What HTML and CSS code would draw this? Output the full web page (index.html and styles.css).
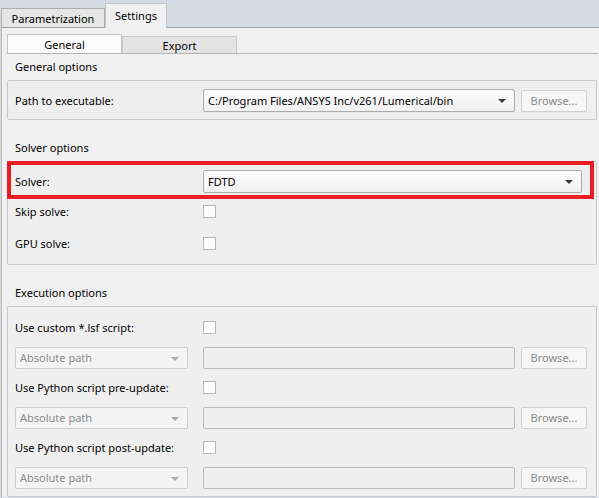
FILE: index.html
```html
<!DOCTYPE html>
<html>
<head>
  <title>Settings</title>
  <link rel="stylesheet" href="styles.css">
</head>
<body>
  <div class="window">

    <!-- top tabs -->
    <div class="tabbar">
      <div class="tab">Parametrization</div>
      <div class="tab active">Settings</div>
    </div>

    <div class="pane">
      <div class="subtabs">
        <div class="subtab active">General</div>
        <div class="subtab">Export</div>
      </div>

      <div class="section-title">General options</div>
      <div class="group">
        <div class="row">
          <span class="label">Path to executable:</span>
          <div class="combo">C:/Program Files/ANSYS Inc/v261/Lumerical/bin<span class="arrow"></span></div>
          <button class="browse">Browse...</button>
        </div>
      </div>

      <div class="section-title spaced">Solver options</div>
      <div class="group">
        <div class="highlight"></div>
        <div class="row">
          <span class="label">Solver:</span>
          <div class="combo solver">FDTD<span class="arrow"></span></div>
        </div>
        <div class="row check-row">
          <span class="label">Skip solve:</span>
          <span class="checkbox"></span>
        </div>
        <div class="row check-row">
          <span class="label">GPU solve:</span>
          <span class="checkbox"></span>
        </div>
      </div>

      <div class="section-title spaced">Execution options</div>
      <div class="group exec">
        <div class="row check-row">
          <span class="label">Use custom *.lsf script:</span>
          <span class="checkbox"></span>
        </div>
        <div class="row">
          <div class="combo disabled">Absolute path<span class="arrow"></span></div>
          <div class="field"></div>
          <button class="browse">Browse...</button>
        </div>
        <div class="row check-row">
          <span class="label">Use Python script pre-update:</span>
          <span class="checkbox"></span>
        </div>
        <div class="row">
          <div class="combo disabled">Absolute path<span class="arrow"></span></div>
          <div class="field"></div>
          <button class="browse">Browse...</button>
        </div>
        <div class="row check-row">
          <span class="label">Use Python script post-update:</span>
          <span class="checkbox"></span>
        </div>
        <div class="row">
          <div class="combo disabled">Absolute path<span class="arrow"></span></div>
          <div class="field"></div>
          <button class="browse">Browse...</button>
        </div>
      </div>
    </div>
  </div>
</body>
</html>
```

FILE: styles.css
```css
body {
  margin: 0;
  font-family: "Noto Sans", "Open Sans", sans-serif;
  font-size: 11px;
  color: #000;
  background: #f0f0f0;
  overflow: hidden;
}

.window {
  width: 599px;
  height: 498px;
  background: #d4dbe3;
  padding-left: 1px;
  box-sizing: border-box;
}

.tabbar {
  height: 27px;
  display: flex;
  align-items: flex-end;
}

.tab {
  box-sizing: border-box;
  height: 19px;
  width: 104px;
  border: 1px solid #adadad;
  border-bottom: none;
  background: #e6e6e6;
  display: flex;
  align-items: center;
  justify-content: center;
}

.tab.active {
  height: 25px;
  width: 62px;
  background: #f0f0f0;
  border-color: #c4c4c4;
  position: relative;
  top: 1px;
  z-index: 1;
  padding-bottom: 2px;
}

.pane {
  background: #f0f0f0;
  border-top: 1px solid #a3a3a3;
  border-left: 1px solid #b8b8b8;
  padding: 5px 0 0 5px;
  height: 470px;
  box-sizing: border-box;
}

.subtabs {
  display: flex;
  align-items: flex-end;
  height: 20px;
  border-bottom: 1px solid #b4b4b4;
  margin-right: 1px;
}

.subtab {
  box-sizing: border-box;
  width: 115px;
  height: 17px;
  border: 1px solid #c8c8c8;
  border-bottom: none;
  background: #e3e3e3;
  display: flex;
  align-items: center;
  justify-content: center;
}

.subtab.active {
  height: 19px;
  background: #fbfbfb;
  border-color: #c4c4c4;
}

.section-title {
  height: 26px;
  line-height: 25px;
  padding-left: 8px;
}

.section-title.spaced {
  margin-top: 15px;
}

.group {
  position: relative;
  box-sizing: border-box;
  width: 590px;
  border: 1px solid #c9c9c9;
  border-radius: 2px;
  background: #efefef;
  padding: 8px 8px 7px 7px;
  display: flex;
  flex-direction: column;
  gap: 5px;
}

.group.exec {
  padding-top: 7px;
}

.highlight {
  position: absolute;
  left: -1px;
  top: -1px;
  width: 587px;
  height: 38px;
  box-sizing: border-box;
  border: 4px solid #ec1c24;
}

.row {
  display: grid;
  grid-template-columns: 173px 312px 66px;
  column-gap: 15px;
  align-items: center;
  height: 23px;
}

.row > :nth-child(3) {
  margin-left: -9px;
}

.check-row {
  height: 27px;
}

.label {
  white-space: nowrap;
}

.combo {
  position: relative;
  box-sizing: border-box;
  height: 23px;
  border: 1px solid #acacac;
  border-radius: 2px;
  background: linear-gradient(#fdfdfd, #f1f1f1);
  padding-left: 4px;
  line-height: 21px;
  white-space: nowrap;
}

.combo.solver {
  width: 379px;
}

.combo.disabled {
  height: 22px;
  line-height: 20px;
  background: #f4f4f4;
  border-color: #cbcbcb;
  color: #8c8c8c;
}

.arrow {
  position: absolute;
  right: 8px;
  top: 9px;
  border-left: 4px solid transparent;
  border-right: 4px solid transparent;
  border-top: 4px solid #3a3a3a;
}

.combo.disabled .arrow {
  border-top-color: #a8a8a8;
}

.field {
  box-sizing: border-box;
  height: 22px;
  border: 1px solid #bcbcbc;
  border-radius: 2px;
  background: #efefef;
}

.browse {
  box-sizing: border-box;
  width: 66px;
  height: 22px;
  font: inherit;
  color: #8a8a8a;
  background: #f6f6f6;
  border: 1px solid #d0d0d0;
  border-radius: 2px;
  padding: 0;
}

.checkbox {
  box-sizing: border-box;
  width: 13px;
  height: 13px;
  border: 1px solid #b6b6b6;
  background: #fff;
}
```
